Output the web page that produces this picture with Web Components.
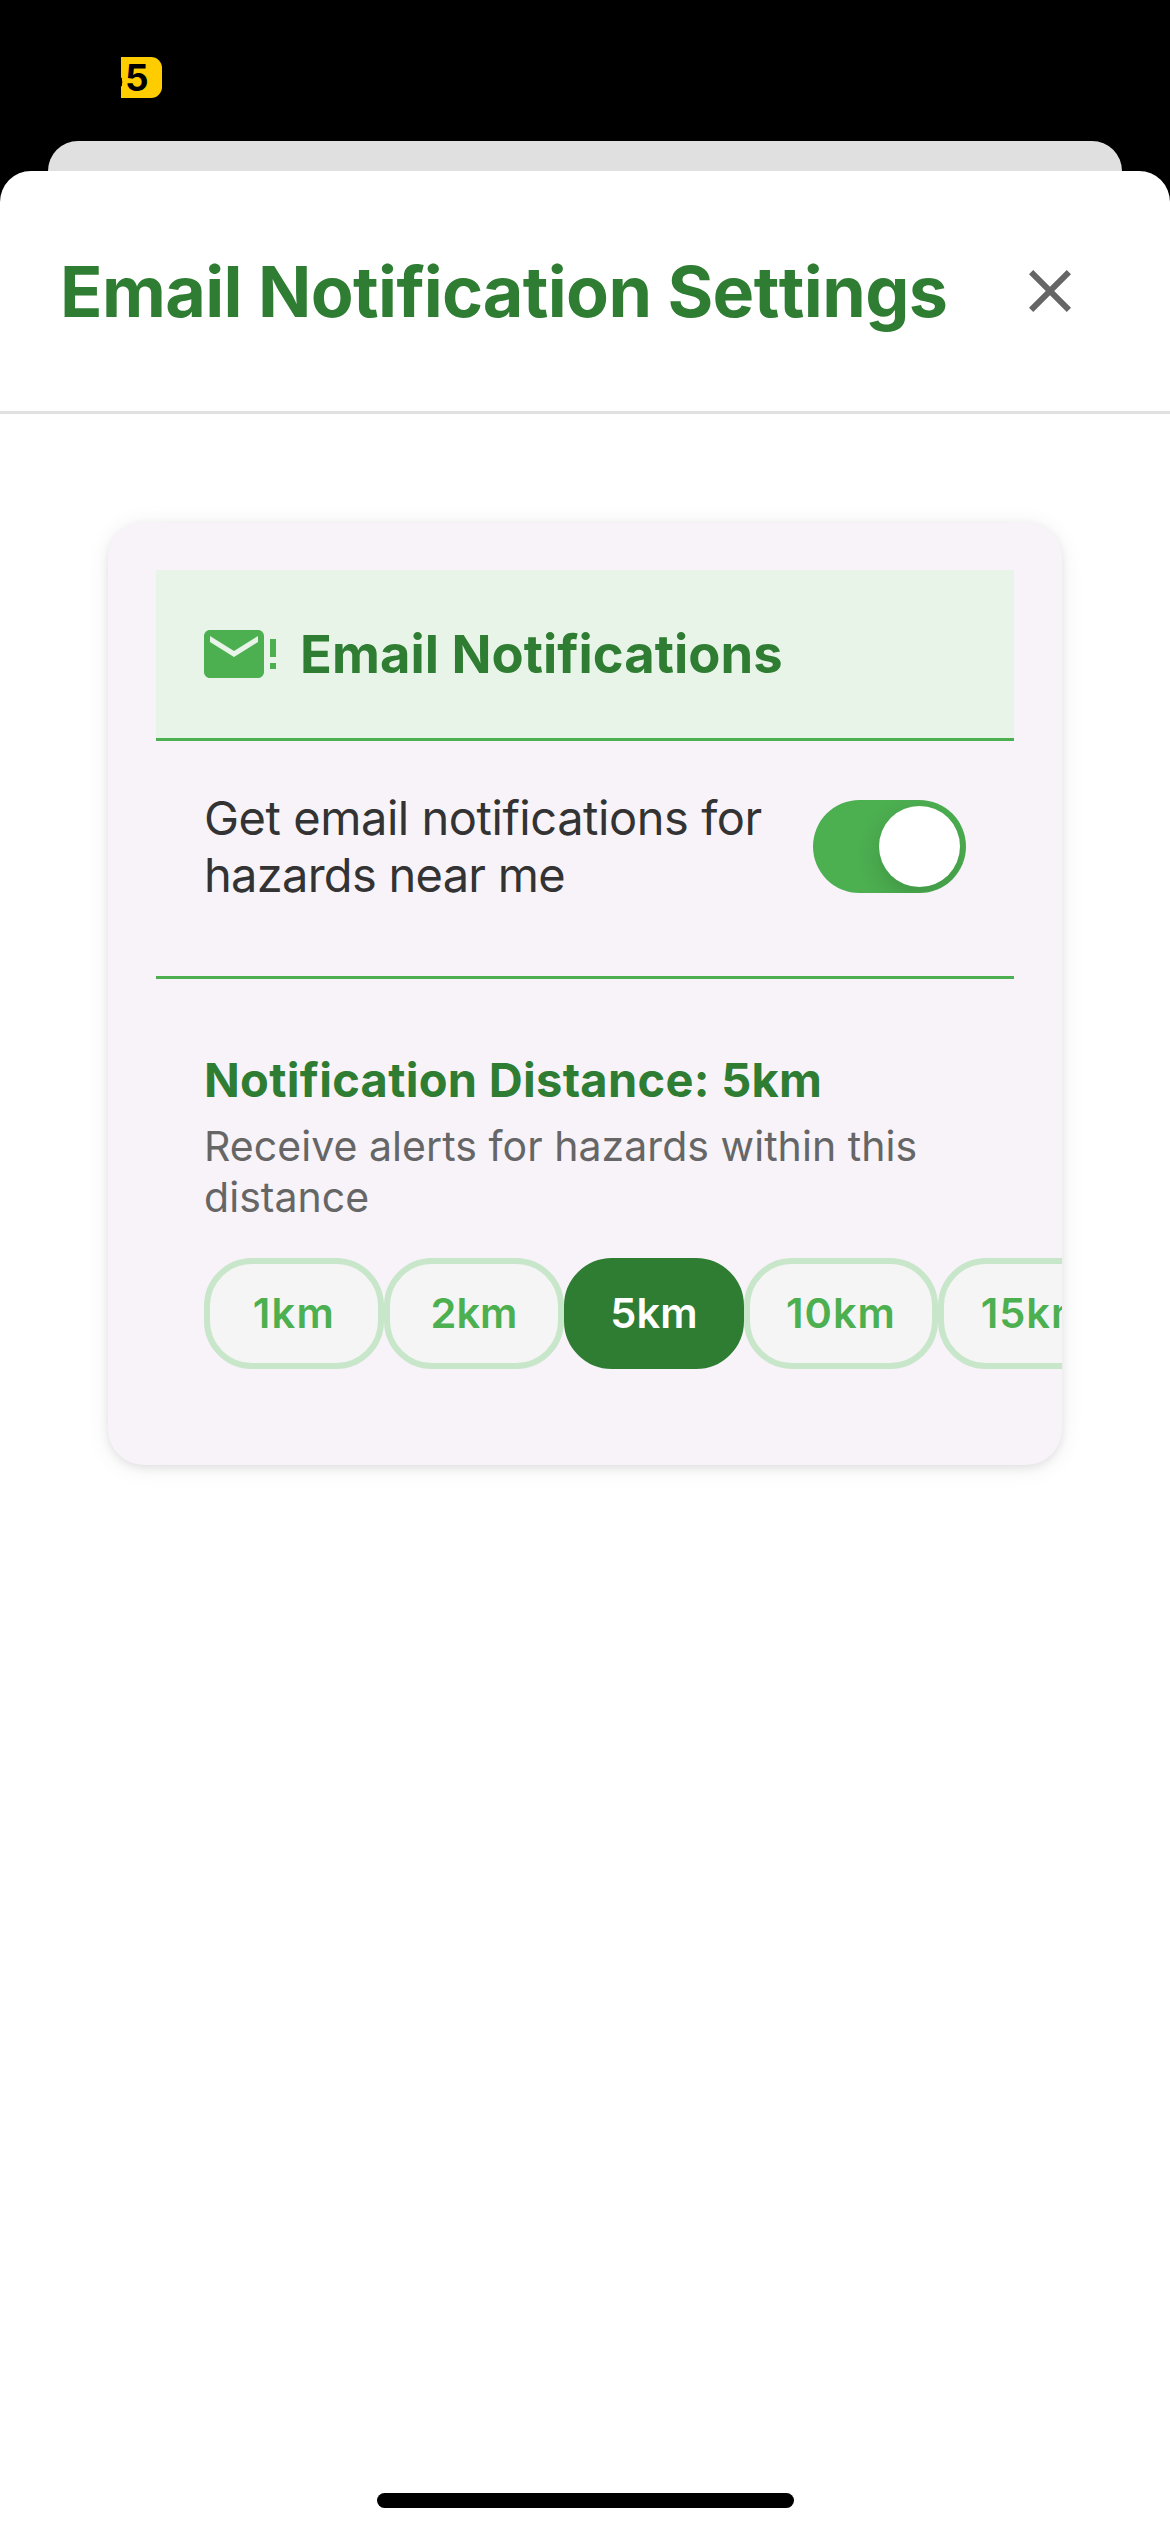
<!DOCTYPE html>
<html lang="en">
<head>
<meta charset="utf-8">
<title>Email Notification Settings</title>
<style>
  html, body { margin: 0; height: 2532px; background: #000; overflow: hidden; }
  body { font-family: Inter, Roboto, sans-serif; -webkit-font-smoothing: antialiased; }
</style>
</head>
<body>
<app-screen>
  <status-pill slot="status">5</status-pill>
  <modal-sheet>
    <sheet-header slot="header">Email Notification Settings</sheet-header>
    <settings-card>
      <card-title>Email Notifications</card-title>
      <toggle-row>Get email notifications for <span style="letter-spacing:-.72px">hazards near me</span></toggle-row>
      <distance-section>
        <span slot="title">Notification Distance: 5km</span>
        <span slot="description">Receive alerts for hazards within this distance</span>
        <distance-chip style="--w:180px; --ls:1.4px">1km</distance-chip>
        <distance-chip style="--w:180px">2km</distance-chip>
        <distance-chip style="--w:180px" selected>5km</distance-chip>
        <distance-chip style="--w:194px; --ls:1px">10km</distance-chip>
        <distance-chip style="--w:194px; --ls:1px">15km</distance-chip>
      </distance-section>
    </settings-card>
  </modal-sheet>
</app-screen>
<script>
  const define = (name, html) => customElements.define(name, class extends HTMLElement {
    constructor() {
      super();
      this.attachShadow({ mode: 'open' }).innerHTML = html;
    }
  });

  define('app-screen', `
    <style>
      :host { display: flex; flex-direction: column; width: 1170px; height: 2532px; background: #000; }
      .status { height: 141px; padding: 57px 0 0 121px; box-sizing: border-box; flex: none; }
      .behind { height: 30px; margin: 0 48px; background: #e0e0e0; border-radius: 30px 30px 0 0; flex: none; }
    </style>
    <div class="status"><slot name="status"></slot></div>
    <div class="behind"></div>
    <slot></slot>`);

  define('status-pill', `
    <style>
      :host { display: block; width: 41px; height: 41px; box-sizing: border-box; padding-left: 4px;
        border-radius: 0 11px 11px 0; color: #000; font-size: 37px; font-weight: 700; line-height: 41px;
        background: radial-gradient(ellipse 1.6px 5px at 0 25px, #000 75%, transparent 100%), #ffcc00; }
    </style><slot></slot>`);

  define('modal-sheet', `
    <style>
      :host { display: flex; flex-direction: column; flex: 1; background: #fff; border-radius: 31px 31px 0 0; }
      main { flex: 1; padding: 108px 108px 0; }
      .home { width: 417px; height: 15px; margin: 0 0 24px 377px; border-radius: 8px; background: #000; }
    </style>
    <slot name="header"></slot>
    <main><slot></slot></main>
    <div class="home"></div>`);

  define('sheet-header', `
    <style>
      :host { display: flex; align-items: center; justify-content: space-between; height: 240px;
        padding: 0 84px 0 60px; border-bottom: 3px solid #e0e0e0; }
      h1 { margin: 0; padding-top: 2px; font-size: 70px; line-height: 84px; font-weight: 700; color: #2e7d32;
        letter-spacing: -0.6px; font-kerning: none; white-space: nowrap; }
      svg { display: block; width: 72px; height: 72px; fill: #666; }
    </style>
    <h1><slot></slot></h1>
    <svg viewBox="0 0 24 24"><path d="M19 6.41L17.59 5 12 10.59 6.41 5 5 6.41 10.59 12 5 17.59 6.41 19 12 13.41 17.59 19 19 17.59 13.41 12z"/></svg>`);

  define('settings-card', `
    <style>
      :host { display: block; height: 943px; box-sizing: border-box; border-radius: 36px; background: #f7f3f9;
        padding-top: 48px; box-shadow: 0 3px 9px rgba(0,0,0,.08), 0 3px 24px rgba(0,0,0,.07); }
      div { height: 895px; overflow: hidden; border-radius: 0 0 36px 36px; }
    </style>
    <div><slot></slot></div>`);

  define('card-title', `
    <style>
      :host { display: flex; align-items: center; gap: 24px; height: 168px; margin: 0 48px; padding: 0 48px;
        background: #e8f4e8; border-bottom: 3px solid #4caf50; }
      svg { display: block; width: 72px; height: 72px; fill: #4caf50; overflow: visible; flex: none; }
      h2 { margin: 0; font-size: 52.5px; line-height: 66px; font-weight: 700; color: #2e7d32; letter-spacing: .04px; white-space: nowrap; }
    </style>
    <svg viewBox="0 0 24 24"><path d="M24 7h-2v6h2zM24 15h-2v2h2zM20 6c0-1.1-.9-2-2-2H2C.9 4 0 4.9 0 6v12c0 1.1.9 2 2 2h16c1.1 0 2-.9 2-2zM18 6l-8 5-8-5v2l8 5 8-5z" fill-rule="evenodd"/></svg>
    <h2><slot></slot></h2>`);

  define('toggle-row', `
    <style>
      :host { display: flex; align-items: center; justify-content: space-between; margin: 0 48px;
        padding: 48px 48px 73px; border-bottom: 3px solid #4caf50; }
      p { margin: 0; width: 580px; font-size: 47px; line-height: 57px; color: #333; letter-spacing: -.45px; }
      .track { display: flex; justify-content: flex-end; width: 153px; height: 93px; padding: 6px; box-sizing: border-box;
        border-radius: 47px; background: #4caf50; overflow: hidden; flex: none; }
      .thumb { width: 81px; height: 81px; border-radius: 50%; background: #fff; box-shadow: 0 9px 24px rgba(0,0,0,.15); }
    </style>
    <p><slot></slot></p>
    <div class="track"><div class="thumb"></div></div>`);

  define('distance-section', `
    <style>
      :host { display: block; padding: 72px 0 0 96px; }
      h3 { margin: 0; font-size: 47px; line-height: 57px; font-weight: 700; color: #2e7d32; letter-spacing: .29px; }
      p { margin: 13px 0 0; width: 762px; font-size: 41px; line-height: 51px; color: #666; letter-spacing: .05px; }
      .chips { display: flex; margin-top: 35px; }
    </style>
    <h3><slot name="title"></slot></h3>
    <p><slot name="description"></slot></p>
    <div class="chips"><slot></slot></div>`);

  define('distance-chip', `
    <style>
      :host { display: flex; flex: none; align-items: center; justify-content: center; width: var(--w); height: 111px;
        box-sizing: border-box; border: 6px solid #c8e6c9; border-radius: 48px; background: #f5f5f5;
        color: #4caf50; font-size: 41.5px; font-weight: 600; line-height: 51px; letter-spacing: var(--ls, .1px); }
      :host([selected]) { background: #2e7d32; border-color: #2e7d32; color: #fff; }
    </style><slot></slot>`);
</script>
</body>
</html>
